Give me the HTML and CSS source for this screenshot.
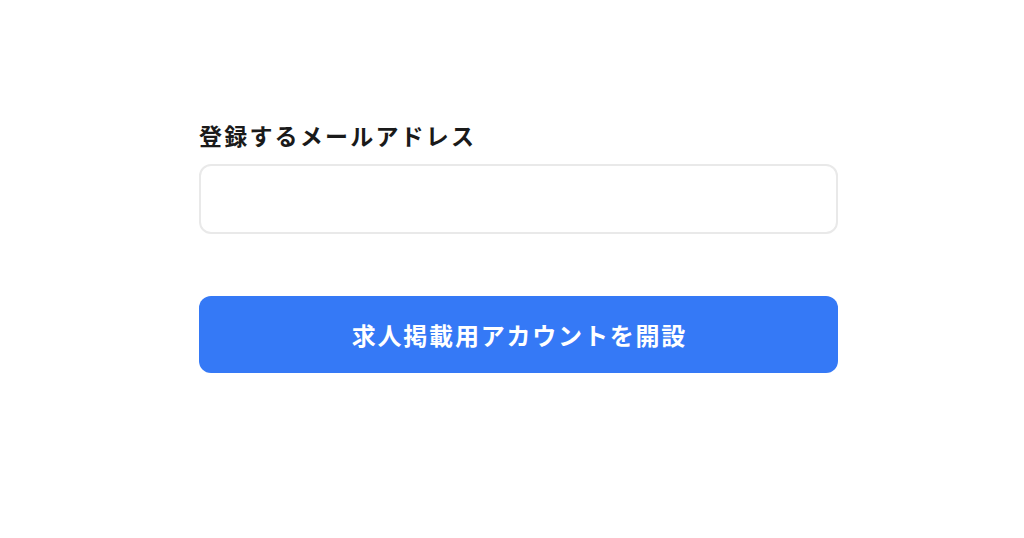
FILE: index.html
```html
<!DOCTYPE html>
<html lang="ja">
<head>
<meta charset="utf-8">
<link rel="stylesheet" href="styles.css">
</head>
<body>
<main class="page">
  <form class="form">
    <label class="label" for="email">登録するメールアドレス</label>
    <input class="input" id="email" type="email">
    <button class="button" type="button">求人掲載用アカウントを開設</button>
  </form>
</main>
</body>
</html>
```

FILE: styles.css
```css
html, body {
  margin: 0;
  padding: 0;
  background: #ffffff;
}
.page {
  padding: 118px 0 0 199px;
  font-family: "Noto Sans CJK JP", "Noto Sans", sans-serif;
}
.form {
  width: 639px;
  display: flex;
  flex-direction: column;
}
.label {
  font-size: 23px;
  font-weight: 700;
  line-height: 34px;
  letter-spacing: 2.2px;
  color: #1a1a1a;
  margin-bottom: 12px;
}
.input {
  box-sizing: border-box;
  height: 70px;
  border: 2.5px solid #e9e9e9;
  border-radius: 12px;
  background: #fff;
  outline: none;
  margin: 0 0 62px;
}
.button {
  box-sizing: border-box;
  height: 77px;
  border: none;
  border-radius: 12px;
  background: #3579f6;
  color: #fff;
  font-family: inherit;
  font-size: 24px;
  font-weight: 700;
  letter-spacing: 1.8px;
  text-indent: 1.8px;
  padding: 0;
}
```
